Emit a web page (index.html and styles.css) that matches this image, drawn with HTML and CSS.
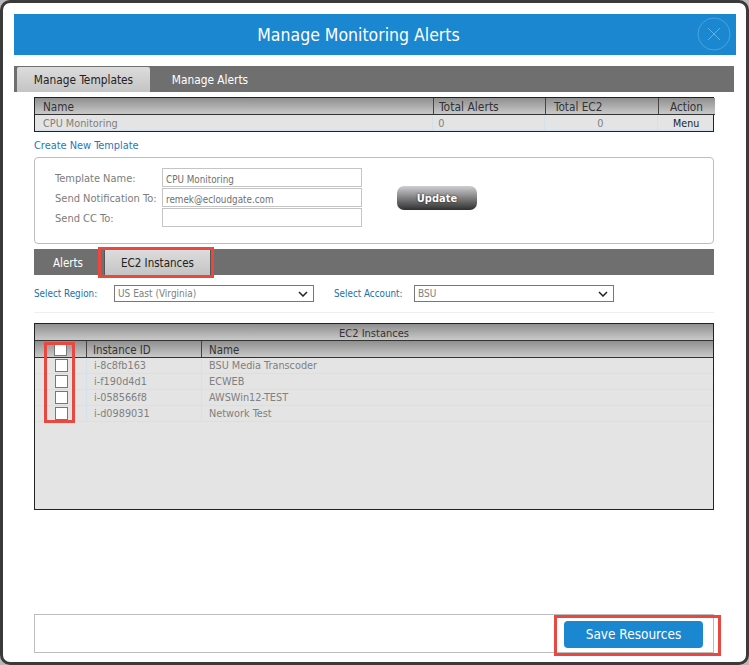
FILE: index.html
```html
<!DOCTYPE html>
<html lang="en">
<head>
<meta charset="utf-8">
<title>Manage Monitoring Alerts</title>
<link rel="stylesheet" href="styles.css">
</head>
<body>
<div class="dialog">
  <header class="title-bar">
    <h1>Manage Monitoring Alerts</h1>
    <button class="close" aria-label="Close">
      <svg viewBox="0 0 34 34" width="34" height="34"><circle cx="17" cy="17" r="16" fill="none" stroke="#4aa3dc" stroke-width="1"/><path d="M11 11 L23 23 M23 11 L11 23" stroke="#5fb0e4" stroke-width="1" fill="none"/></svg>
    </button>
  </header>

  <nav class="tabs main-tabs">
    <span class="tab active main-active">Manage Templates</span>
    <span class="tab main-second">Manage Alerts</span>
  </nav>

  <section class="content">
    <div class="grid-box templates">
      <div class="row head">
        <span class="c-name">Name</span><span class="c-alerts">Total Alerts</span><span class="c-ec2">Total EC2</span><span class="c-action">Action</span>
      </div>
      <div class="row body-row">
        <span class="c-name">CPU Monitoring</span><span class="c-alerts">0</span><span class="c-ec2 centered">0</span><span class="c-action menu">Menu</span>
      </div>
    </div>

    <a class="create-link" href="#">Create New Template</a>

    <form class="template-form">
      <div class="fields">
        <label>Template Name:</label><div class="input">CPU Monitoring</div>
        <label>Send Notification To:</label><div class="input">remek@ecloudgate.com</div>
        <label>Send CC To:</label><div class="input"></div>
      </div>
      <span class="update">Update</span>
    </form>

    <nav class="tabs sub-tabs">
      <span class="tab sub-first">Alerts</span>
      <span class="tab active sub-active">EC2 Instances</span>
    </nav>

    <div class="selectors">
      <label class="sel-label">Select Region:</label>
      <div class="select"><span>US East (Virginia)</span><svg viewBox="0 0 10 6" width="10" height="6"><path d="M1 1 L5 5 L9 1" fill="none" stroke="#222" stroke-width="1.5"/></svg></div>
      <label class="sel-label gap">Select Account:</label>
      <div class="select"><span>BSU</span><svg viewBox="0 0 10 6" width="10" height="6"><path d="M1 1 L5 5 L9 1" fill="none" stroke="#222" stroke-width="1.5"/></svg></div>
    </div>

    <div class="grid-box instances">
      <div class="inst-title">EC2 Instances</div>
      <div class="inst-row inst-head">
        <span class="i-check"><i class="box head-box"></i></span><span class="i-id">Instance ID</span><span class="i-name">Name</span>
      </div>
      <div class="inst-row"><span class="i-check"><i class="box"></i></span><span class="i-id">i-8c8fb163</span><span class="i-name">BSU Media Transcoder</span></div>
      <div class="inst-row"><span class="i-check"><i class="box"></i></span><span class="i-id">i-f190d4d1</span><span class="i-name">ECWEB</span></div>
      <div class="inst-row"><span class="i-check"><i class="box"></i></span><span class="i-id">i-058566f8</span><span class="i-name">AWSWin12-TEST</span></div>
      <div class="inst-row"><span class="i-check"><i class="box"></i></span><span class="i-id">i-d0989031</span><span class="i-name">Network Test</span></div>
      <div class="check-mark"></div>
    </div>

    <footer class="save-bar">
      <div class="save-mark"><span class="save">Save Resources</span></div>
    </footer>
  </section>
</div>
</body>
</html>
```

FILE: styles.css
```css
* { box-sizing: border-box; }
html, body { margin: 0; padding: 0; }
body {
  width: 749px;
  height: 665px;
  background: #b9b9b9;
  font-family: "DejaVu Sans Condensed", "DejaVu Sans", sans-serif;
  font-stretch: condensed;
  font-size: 10px;
  overflow: hidden;
}
.dialog {
  width: 749px;
  height: 665px;
  background: #fff;
  border: 3px solid #3a3a3a;
  border-radius: 10px;
  padding: 11px 10px 0 11px;
}
.title-bar {
  position: relative;
  height: 41px;
  width: 722px;
  padding-right: 33px;
  background: #1a87d0;
  display: flex;
  align-items: center;
  justify-content: center;
}
.title-bar h1 {
  margin: 0;
  font-size: 17.5px;
  font-weight: 400;
  color: #fff;
}
.close {
  position: absolute;
  right: 5px;
  top: 3px;
  width: 34px;
  height: 34px;
  padding: 0;
  border: 0;
  background: none;
  display: block;
}
.close svg { display: block; }
.tabs {
  display: flex;
  height: 26px;
  background: #6f6f6f;
  align-items: flex-end;
  font-size: 11.8px;
  color: #fff;
}
.main-tabs { width: 720px; margin-top: 11px; padding-left: 3px; }
.tab {
  display: flex;
  align-items: center;
  justify-content: center;
  height: 25px;
}
.tab.active {
  color: #222;
  background: linear-gradient(#dcdcdc, #c4c4c4);
  border-radius: 2px 2px 0 0;
}
.main-active { width: 133px; }
.main-second { width: 120px; }
.content { padding: 5px 0 0 20px; width: 700px; }
.grid-box { border: 1px solid #222; background: #e4e4e4; }
.templates { height: 35px; width: 680px; }
.row { display: flex; }
.head {
  height: 17px;
  background: linear-gradient(#8f8f8f, #c9c9c9);
  font-size: 11.7px;
  color: #333;
  border-bottom: 1px solid #333;
  line-height: 19px;
  width: 680px;
}
.head span { padding-left: 8px; border-left: 1px solid #444; height: 16px; }
.head span:first-child { border-left: 0; }
.head .c-alerts { padding-left: 5px; font-size: 12px; }
.body-row {
  height: 16px;
  color: #808080;
  font-size: 10.8px;
  line-height: 17px;
  border-bottom: 1px solid #d4dfee;
}
.body-row span { padding-left: 8px; border-left: 1px solid #d3e0ee; }
.body-row span:first-child { border-left: 0; }
.body-row .c-alerts { padding-left: 5px; }
.c-name { width: 398px; }
.c-alerts { width: 112px; }
.c-ec2 { width: 113px; }
.c-action { width: 56px; }
.head .c-action { padding-left: 11px; width: 57px; }
.body-row .centered { padding-left: 52px; }
.body-row .menu { color: #222; padding-left: 15px; font-size: 10.6px; }
.create-link {
  display: block;
  margin-top: 6px;
  height: 19px;
  color: #2a76b8;
  font-size: 10.9px;
  line-height: 15px;
  text-decoration: none;
}
.template-form {
  width: 680px;
  height: 87px;
  border: 1px solid #bdbdbd;
  border-radius: 4px;
  display: flex;
  padding: 10px 0 0 20px;
}
.fields {
  display: grid;
  grid-template-columns: 107px 200px;
  grid-auto-rows: 20px;
  height: 60px;
}
.fields label { font-size: 11px; color: #7c7c7c; line-height: 22px; }
.input {
  border: 1px solid #c4c4c4;
  height: 19px;
  font-size: 9.8px;
  color: #707070;
  padding: 3px 3px 0;
  line-height: 16px;
}
.update {
  margin: 18px 0 0 35px;
  width: 80px;
  height: 24px;
  border-radius: 7px;
  background: linear-gradient(#cfcfd2, #2f2f2f);
  color: #fff;
  font-size: 11px;
  font-weight: 600;
  text-align: center;
  line-height: 26px;
  text-shadow: 0 0 2px #111;
}
.sub-tabs { width: 680px; margin-top: 5px; font-size: 11.5px; }
.sub-first { width: 71px; justify-content: flex-start; padding-left: 19px; }
.tab.sub-active {
  position: relative;
  width: 105px;
  border-radius: 0;
  box-shadow: 1px 0 0 #555, -1px 0 0 #555;
}
.sub-active::before {
  content: "";
  position: absolute;
  left: -7px;
  right: -4px;
  top: -3px;
  bottom: -3px;
  border: 3px solid #e8483f;
}
.selectors {
  display: flex;
  align-items: flex-start;
  height: 38px;
  width: 680px;
  padding-top: 10px;
  border-bottom: 1px solid #eee;
  font-size: 9.8px;
}
.sel-label { color: #1b6fa5; width: 80px; line-height: 18px; }
.sel-label.gap { margin-left: 20px; }
.select {
  width: 200px;
  height: 17px;
  border: 1px solid #777;
  color: #808080;
  font-size: 10px;
  padding: 0 5px 0 3px;
  display: flex;
  align-items: center;
  justify-content: space-between;
}
.instances {
  position: relative;
  width: 680px;
  height: 187px;
  margin-top: 10px;
}
.inst-title {
  height: 17px;
  background: linear-gradient(#8f8f8f, #c9c9c9);
  border-bottom: 1px solid #333;
  text-align: center;
  font-size: 11px;
  line-height: 20px;
  color: #333;
}
.inst-row {
  display: flex;
  height: 16px;
  font-size: 10.8px;
  color: #808080;
  line-height: 15px;
  border-bottom: 1px solid #d3e0ee;
}
.inst-head {
  background: linear-gradient(#8f8f8f, #c9c9c9);
  border-bottom: 1px solid #333;
  color: #333;
  font-size: 11.4px;
  height: 17px;
  line-height: 19px;
}
.inst-row span { border-left: 1px solid #d3e0ee; padding-left: 7px; }
.inst-head span { border-left: 1px solid #444; padding-left: 6px; }
.inst-head .i-name { padding-left: 7px; }
.inst-row .i-check { width: 51px; border-left: 0; padding-left: 20px; }
.i-id { width: 115px; }
.i-name { flex: 1; }
.box {
  display: block;
  width: 13px;
  height: 13px;
  margin-top: 1px;
  background: #fff;
  border: 1px solid #777;
}
.head-box { margin-top: 2px; margin-left: -1px; }
.check-mark {
  position: absolute;
  left: 9px;
  top: 18px;
  width: 31px;
  height: 81px;
  border: 3px solid #e8483f;
}
.save-bar {
  position: relative;
  width: 680px;
  height: 39px;
  margin-top: 104px;
  border: 1px solid #bdbdbd;
}
.save-mark {
  position: absolute;
  right: -8px;
  top: 0;
  width: 167px;
  height: 41px;
  border: 3px solid #e8483f;
  padding: 3px 0 0 7px;
}
.save {
  display: block;
  width: 139px;
  height: 27px;
  background: #1a87d0;
  border-radius: 4px;
  color: #fff;
  text-align: center;
  font-size: 13.5px;
  line-height: 27px;
}
```
